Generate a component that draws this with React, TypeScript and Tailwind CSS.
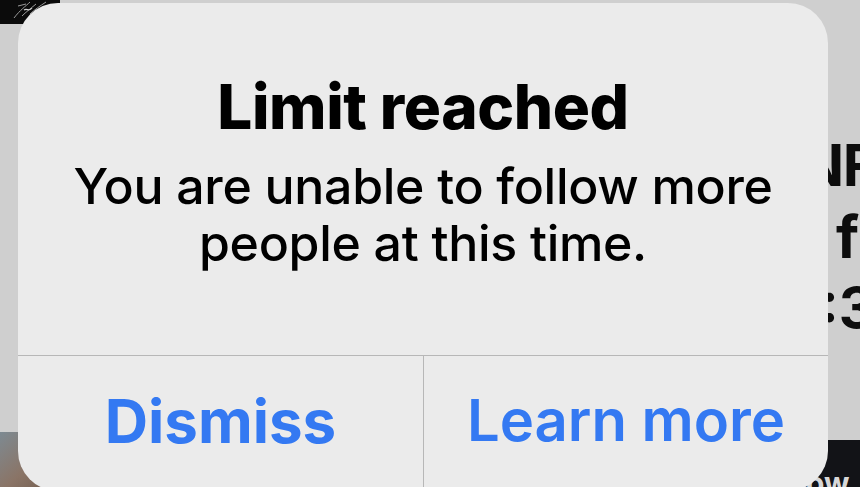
import React from "react";

const font = { fontFamily: "Inter, 'Noto Sans', sans-serif" };

function Scribble() {
  return (
    <svg width="60" height="24" viewBox="0 0 60 24" className="block">
      <rect width="60" height="24" fill="#0b0b0b" />
      <path d="M14 18 C20 10, 26 6, 30 2 M22 16 C26 12, 30 9, 36 4 M18 6 L26 4 M30 14 C34 10, 40 6, 46 2" stroke="#9a9a9a" strokeWidth="1" fill="none" />
      <path d="M24 10 C27 8, 29 12, 32 8" stroke="#cfcfcf" strokeWidth="1.2" fill="none" />
    </svg>
  );
}

export default function App() {
  return (
    <div className="relative w-[860px] h-[487px] overflow-hidden bg-[#cfcfcf]" style={font}>
      {/* Page behind the alert */}
      <div className="absolute left-0 top-0">
        <Scribble />
      </div>
      <div className="absolute left-0 top-[432px] w-[70px] h-[60px] bg-gradient-to-br from-[#7d8a92] via-[#8a7466] to-[#6a5648]" />
      <div className="absolute left-[760px] top-[440px] w-[100px] h-[50px] bg-[#121317] pl-[46px] pt-[28px] text-[30px] font-bold leading-none text-[#d8d8d8]">
        ow
      </div>
      <div className="absolute left-[800px] top-[136px] flex flex-col gap-[14px] text-[58px] font-bold leading-none text-[#0d0d0d]">
        <span className="tracking-tight">NF</span>
        <span className="pl-[36px]">f</span>
        <span className="pl-[20px] text-[56px]">:3</span>
      </div>

      {/* Alert */}
      <div className="relative ml-[18px] mt-[3px] w-[810px] h-[488px] rounded-[40px] bg-[#ebebeb] flex flex-col">
        <div className="h-[352px] pt-[73px] text-center text-black">
          <p className="text-[62px] font-extrabold leading-none tracking-[-0.4px]">Limit reached</p>
          <p className="mt-[20px] text-[50px] font-medium leading-[57px] tracking-[-0.3px]">
            You are unable to follow more
            <br />
            people at this time.
          </p>
        </div>
        <div className="flex-1 grid grid-cols-[406px_1fr] border-t border-[#b7b7b7]">
          <div className="border-r border-[#b7b7b7] pt-[35px] text-center">
            <span className="text-[60px] font-bold leading-none text-[#3479f2]">Dismiss</span>
          </div>
          <div className="pt-[35px] text-center">
            <span className="text-[58px] font-semibold leading-none text-[#3479f2]">Learn more</span>
          </div>
        </div>
      </div>
    </div>
  );
}
